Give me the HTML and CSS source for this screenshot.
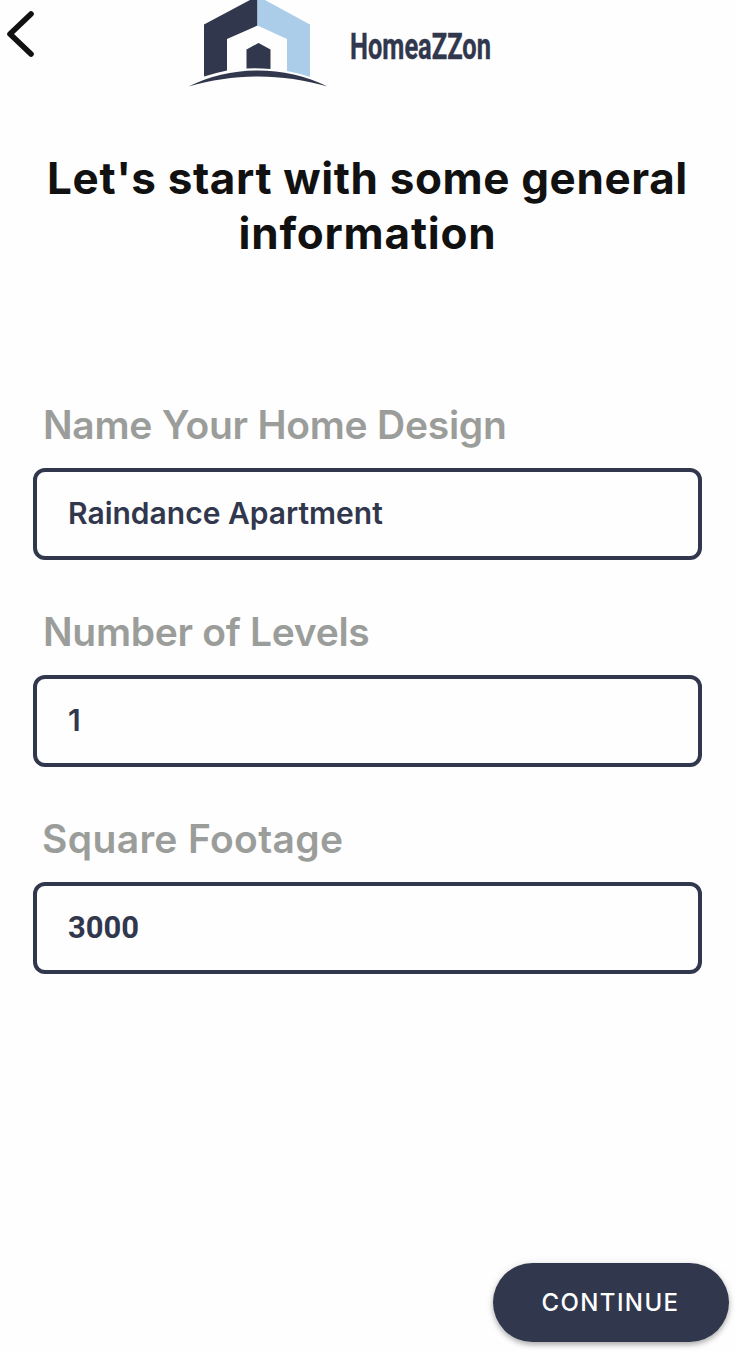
FILE: index.html
```html
<!DOCTYPE html>
<html lang="en">
<head>
<meta charset="utf-8">
<meta name="viewport" content="width=device-width, initial-scale=1">
<title>HomeaZZon</title>
<link rel="stylesheet" href="styles.css">
</head>
<body>
<main class="screen">
  <header class="topbar">
    <button class="back" aria-label="Back">
      <svg width="40" height="70" viewBox="0 0 40 70" fill="none" stroke="#111" stroke-width="5.600" stroke-linecap="round" stroke-linejoin="round"><path d="M31 14 10 34 31 54"/></svg>
    </button>
    <svg class="logo" width="400" height="92" viewBox="0 0 400 92">
      <path fill="#31374d" d="M24 24.5 77.5-4V25.500L47 39V70.500Q35 73 24 76.500Z"/>
      <path fill="#abcdea" d="M77.5-4 130 24.500V77Q118 73 107 71V39L77.500 25.500Z"/>
      <path fill="#31374d" d="M66.500 49.500 78.500 43 90.500 49.500V69Q78.500 68 66.500 68.500Z"/>
      <path fill="#31374d" d="M8.500 86.500C50 65 105 65 147.500 86.500C102 73 55 73 8.500 86.500Z"/>
      <text class="wordmark" x="170" y="58.500" textLength="141" lengthAdjust="spacingAndGlyphs">HomeaZZon</text>
    </svg>
  </header>
  <h1 class="title"><span class="title-first">Let's start with some general</span><br><span class="title-second">information</span></h1>
  <form class="form">
    <div class="field">
      <label class="label label-name" for="name">Name Your Home Design</label>
      <input class="input" id="name" type="text" value="Raindance Apartment">
    </div>
    <div class="field">
      <label class="label label-levels" for="levels">Number of Levels</label>
      <input class="input" id="levels" type="text" value="1">
    </div>
    <div class="field">
      <label class="label label-area" for="area">Square Footage</label>
      <input class="input input-number" id="area" type="text" value="3000">
    </div>
  </form>
  <footer class="footer"><button class="continue">CONTINUE</button></footer>
</main>
</body>
</html>
```
FILE: styles.css
```css
* { box-sizing: border-box; }
body { margin: 0; background: #fefefe; font-family: Inter, "Liberation Sans", sans-serif; }
.screen { display: flex; flex-direction: column; height: 1351px; overflow: hidden; }
.topbar { display: flex; align-items: flex-start; height: 92px; }
.back { width: 40px; height: 70px; padding: 0; border: 0; background: none; }
.back svg { display: block; }
.logo { flex: none; margin-left: 140px; }
.wordmark { font: 700 37px Roboto, sans-serif; fill: #31374d; stroke: #31374d; stroke-width: .4px; }
.title { margin: 59px 0 0; text-align: center; font-size: 44px; line-height: 55px; font-weight: 700; color: #111; white-space: nowrap; }
.title-first { letter-spacing: .62px; }
.title-second { letter-spacing: .8px; }
.form { display: flex; flex-direction: column; gap: 46px; margin: 139px 33px 0; }
.field { display: flex; flex-direction: column; height: 161px; }
.label { height: 68px; padding-left: 10px; font-size: 39px; line-height: 50px; font-weight: 600; color: #9b9d9a; white-space: nowrap; }
.label-name { letter-spacing: -.25px; }
.label-levels { letter-spacing: -.3px; }
.label-area { padding-left: 9px; letter-spacing: .35px; }
.input { width: 668.5px; height: 91.5px; margin: 0; padding: 0 31px 1px; border: 4px solid #31374d; border-radius: 12px; background: #fefefe; color: #31374d; font: 600 30px Inter, sans-serif; outline: 0; }
.input-number { font: 700 31px Roboto, sans-serif; }
.footer { display: flex; justify-content: flex-end; margin-top: auto; padding: 0 6.5px 9px 0; }
.continue { width: 236px; height: 79px; padding: 0; border: 0; border-radius: 40px; background: #31374d; color: #fff; font: 500 24px Inter, sans-serif; letter-spacing: 1.4px; box-shadow: 0 3px 5px rgba(0,0,0,.25), 0 1px 10px rgba(0,0,0,.1); }
```
